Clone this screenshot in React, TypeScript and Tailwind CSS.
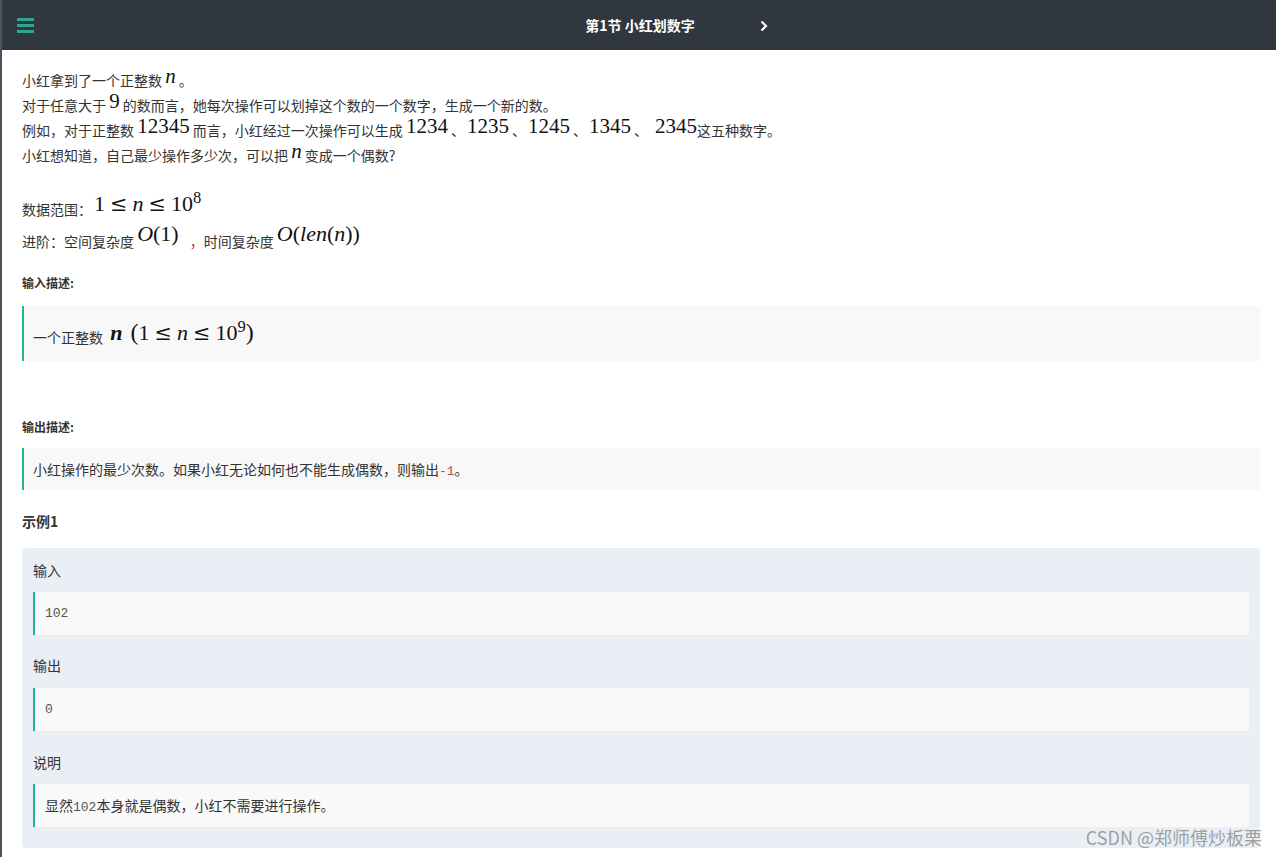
import React from "react";

const M = ({ children, cls = "" }: { children: React.ReactNode; cls?: string }) => (
  <span className={"font-['Liberation_Serif',serif] text-[21px] leading-[0] align-[3px] text-[#111] " + cls}>{children}</span>
);

const Le = () => <span className="mx-[5px] font-['DejaVu_Serif',serif] text-[0.95em]">≤</span>;

const Quote = ({ children, cls = "" }: { children: React.ReactNode; cls?: string }) => (
  <div className={"border-l-2 border-[#1fb894] bg-[#f8f8f8] " + cls}>{children}</div>
);

export default function App() {
  return (
    <div className="relative min-h-[857px] bg-white border-l-2 border-[#4b535e] font-['Noto_Sans_CJK_SC','Noto_Sans',sans-serif] text-[#333]">
      {/* header */}
      <div className="relative flex h-[50px] items-center bg-[#31373f]">
        <div className="ml-[15px] flex w-[17px] flex-col gap-[3px]">
          <div className="h-[3px] bg-[#2ea68f]" />
          <div className="h-[3px] bg-[#2ea68f]" />
          <div className="h-[3px] bg-[#2ea68f]" />
        </div>
        <div className="flex flex-1 justify-center pr-[30px]">
          <span className="text-[14px] font-bold text-white">第1节 小红划数字</span>
        </div>
        <svg className="absolute left-[757px] top-[19px]" width="10" height="14" viewBox="0 0 10 14">
          <path d="M2.5 2.5 L7 7 L2.5 11.5" fill="none" stroke="#fff" strokeWidth="2.2" />
        </svg>
      </div>

      {/* content */}
      <div className="pl-[20px] pr-[16px] pt-[18px] pb-[9px] text-[14px]">
        <div className="leading-[25px]">
          小红拿到了一个正整数 <M><i>n</i></M> 。
        </div>
        <div className="leading-[25px]">
          对于任意大于 <M>9</M> 的数而言，她每次操作可以划掉这个数的一个数字，生成一个新的数。
        </div>
        <div className="leading-[25px]">
          例如，对于正整数 <M>12345</M> 而言，小红经过一次操作可以生成 <M>1234</M>
          <span className="ml-[3px]">、</span>
          <M cls="ml-[2px]">1235</M>
          <span className="ml-[3px]">、</span>
          <M cls="ml-[2px]">1245</M>
          <span className="ml-[3px]">、</span>
          <M cls="ml-[2px]">1345</M>
          <span className="ml-[3px]">、</span>
          <M cls="ml-[7px]">2345</M>这五种数字。
        </div>
        <div className="leading-[25px]">
          小红想知道，自己最少操作多少次，可以把 <M><i>n</i></M> 变成一个偶数?
        </div>

        <div className="mt-[25px] leading-[32px]">
          数据范围：
          <M cls="ml-[2px] text-[22px] align-[4px]">
            1<Le /><i>n</i><Le />10<sup>8</sup>
          </M>
        </div>
        <div className="leading-[32px]">
          进阶：空间复杂度 <M cls="align-[6px] text-[22px]"><i>O</i>(1)</M>
          <span className="ml-[11px] text-[#c0392b]">，</span>时间复杂度 <M cls="align-[6px] text-[22px]"><i>O</i>(<i>len</i>(<i>n</i>))</M>
        </div>

        <div className="mt-[16px] text-[12px] font-bold leading-[20px]">输入描述:</div>
        <Quote cls="mt-[13px] pl-[9px] pt-[19px] pb-[11px]">
          <div className="leading-[25px]">
            一个正整数{" "}
            <M cls="text-[22px] ml-[4px]">
              <b><i>n</i></b>
              <span className="ml-[8px] text-[24px]">(</span>1<Le /><i>n</i><Le />10<sup>9</sup>
              <span className="text-[24px]">)</span>
            </M>
          </div>
        </Quote>

        <div className="mt-[56px] text-[12px] font-bold leading-[20px]">输出描述:</div>
        <Quote cls="mt-[11px] pl-[9px] pt-[9px] pb-[8px]">
          <div className="h-[25px] leading-[25px]">
            小红操作的最少次数。如果小红无论如何也不能生成偶数，则输出
            <span className="font-['Liberation_Mono',monospace] text-[13px] text-[#b5524f]">-1</span>。
          </div>
        </Quote>

        <div className="mt-[21px] text-[14px] font-bold leading-[20px] text-[#333]">示例1</div>
        <div className="mt-[17px] rounded-[4px] bg-[#eaeef5] px-[11px] pt-[12px] pb-[21px]">
          <div className="leading-[20px]">输入</div>
          <Quote cls="mt-[12px] bg-[#f9f9f9] pl-[10px] pt-[9px] pb-[9px]">
            <div className="h-[25px] font-['Liberation_Mono',monospace] text-[13px] leading-[25px] text-[#555]">102</div>
          </Quote>
          <div className="mt-[20px] leading-[20px]">输出</div>
          <Quote cls="mt-[13px] bg-[#f9f9f9] pl-[10px] pt-[9px] pb-[9px]">
            <div className="h-[25px] font-['Liberation_Mono',monospace] text-[13px] leading-[25px] text-[#555]">0</div>
          </Quote>
          <div className="mt-[21px] leading-[20px]">说明</div>
          <Quote cls="mt-[12px] bg-[#f9f9f9] pl-[10px] pt-[9px] pb-[9px]">
            <div className="h-[25px] leading-[25px]">
              显然<span className="font-['Liberation_Mono',monospace] text-[13px] text-[#555]">102</span>本身就是偶数，小红不需要进行操作。
            </div>
          </Quote>
        </div>
      </div>

      {/* watermark */}
      <div className="absolute right-[14px] top-[824px] text-[18px] leading-[26px] text-[#8a8a8a]/80 font-['Noto_Sans_CJK_SC','Liberation_Sans',sans-serif]">
        CSDN @郑师傅炒板栗
      </div>
    </div>
  );
}
